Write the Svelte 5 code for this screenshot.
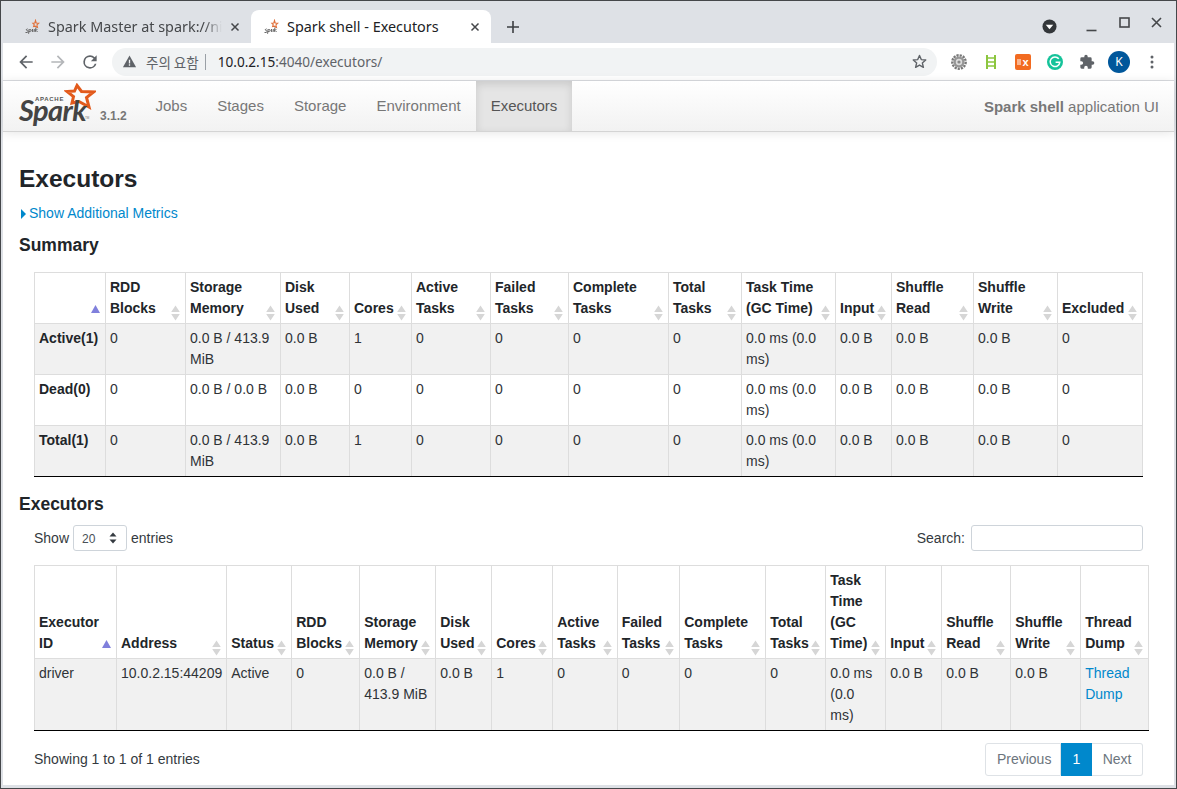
<script>
  const navItems = ['Jobs', 'Stages', 'Storage', 'Environment', 'Executors'];
  const sumWidths = [71, 80, 95, 69, 62, 79, 78, 100, 73, 94, 56, 82, 84, 85];
  const sumHead = [[''], ['RDD', 'Blocks'], ['Storage', 'Memory'], ['Disk', 'Used'], ['Cores'], ['Active', 'Tasks'], ['Failed', 'Tasks'], ['Complete', 'Tasks'], ['Total', 'Tasks'], ['Task Time', '(GC Time)'], ['Input'], ['Shuffle', 'Read'], ['Shuffle', 'Write'], ['Excluded']];
  const mkRow = (name, storage, disk, cores) => [name, '0', storage, disk, cores, '0', '0', '0', '0', '0.0 ms (0.0 ms)', '0.0 B', '0.0 B', '0.0 B', '0'];
  const sumRows = [
    mkRow('Active(1)', '0.0 B / 413.9 MiB', '0.0 B', '1'),
    mkRow('Dead(0)', '0.0 B / 0.0 B', '0.0 B', '0'),
    mkRow('Total(1)', '0.0 B / 413.9 MiB', '0.0 B', '1')
  ];
  const exWidths = [82, 110, 65, 68, 76, 56, 61, 64.5, 62.5, 86, 60, 60, 56, 69, 70, 68];
  const exHead = [['Executor', 'ID'], ['Address'], ['Status'], ['RDD', 'Blocks'], ['Storage', 'Memory'], ['Disk', 'Used'], ['Cores'], ['Active', 'Tasks'], ['Failed', 'Tasks'], ['Complete', 'Tasks'], ['Total', 'Tasks'], ['Task', 'Time', '(GC', 'Time)'], ['Input'], ['Shuffle', 'Read'], ['Shuffle', 'Write'], ['Thread', 'Dump']];
  const exRow = ['driver', '10.0.2.15:44209', 'Active', '0', '0.0 B / 413.9 MiB', '0.0 B', '1', '0', '0', '0', '0', '0.0 ms (0.0 ms)', '0.0 B', '0.0 B', '0.0 B'];
</script>

{#snippet sortIcon(active)}
  {#if active}
    <svg class="sort" viewBox="0 0 9 16" aria-hidden="true"><path d="M4.5 0 L9 8 H0 Z" fill="#8080dc"/></svg>
  {:else}
    <svg class="sort" viewBox="0 0 9 16" aria-hidden="true"><path d="M4.5 0.5 L8.8 7 H0.2 Z M0.2 9 H8.8 L4.5 15.5 Z" fill="#d6d6d6"/></svg>
  {/if}
{/snippet}

{#snippet favicon()}
  <svg class="fav" viewBox="0 0 16 16" aria-hidden="true">
    <path d="M11.5 1.5 L12.2 4 L14.8 4.2 L12.9 5.9 L13.5 8.4 L11.2 7.2 L9.6 7.6 L10.2 5.7 L8.8 4.2 L10.8 4 Z" fill="none" stroke="#e0703a" stroke-width="1.1"/>
    <path d="M1.5 13.5 Q4 14 4 12.4 Q4 11.6 2.6 11.3 Q1.4 10.6 3.6 9.8 M5 10.2 L4.6 14.8 M5.1 10.8 Q7.4 9.8 7 11.8 Q6.6 13 5 12.6 M8.6 10 Q7.8 12 8.4 12.8 M8.8 10.2 L8.6 12.8 M10 12.9 L10.5 10.2 M12 8.4 L11.2 13 M13.4 10 L12 11.4 L13.6 13" fill="none" stroke="#666" stroke-width="1"/>
  </svg>
{/snippet}

<div class="window">
  <div class="tabstrip">
    <div class="tab inactive">
      {@render favicon()}
      <span class="tab-title fade">Spark Master at spark://ni</span>
      <svg class="tab-x" viewBox="0 0 10 10"><path d="M1.5 1.5 L8.5 8.5 M8.5 1.5 L1.5 8.5" stroke="#45474a" stroke-width="1.5"/></svg>
    </div>
    <div class="tab active">
      {@render favicon()}
      <span class="tab-title">Spark shell - Executors</span>
      <svg class="tab-x" viewBox="0 0 10 10"><path d="M1.5 1.5 L8.5 8.5 M8.5 1.5 L1.5 8.5" stroke="#45474a" stroke-width="1.5"/></svg>
    </div>
    <svg class="newtab" viewBox="0 0 12 12"><path d="M6 0 V12 M0 6 H12" stroke="#3c3f43" stroke-width="1.6"/></svg>
    <div class="spacer"></div>
    <svg class="profile-drop" viewBox="0 0 16 16"><circle cx="8" cy="8" r="7.5" fill="#33363a"/><path d="M4 6 H12 L8 11 Z" fill="#fff"/></svg>
    <svg class="winbtn min" viewBox="0 0 11 11"><path d="M0.5 9.5 H10.5" stroke="#45474a" stroke-width="1.6"/></svg>
    <svg class="winbtn max" viewBox="0 0 11 11"><rect x="1" y="1" width="9" height="9" fill="none" stroke="#45474a" stroke-width="1.6"/></svg>
    <svg class="winbtn close" viewBox="0 0 11 11"><path d="M1 1 L10 10 M10 1 L1 10" stroke="#45474a" stroke-width="1.6"/></svg>
  </div>

  <div class="toolbar">
    <svg class="tb" viewBox="0 0 24 24"><path d="M20 11H7.83l5.59-5.59L12 4l-8 8 8 8 1.41-1.41L7.83 13H20v-2z" fill="#5f6368"/></svg>
    <svg class="tb" viewBox="0 0 24 24"><path d="M12 4l-1.41 1.41L16.17 11H4v2h12.17l-5.58 5.59L12 20l8-8z" fill="#b4b6b9"/></svg>
    <svg class="tb" viewBox="0 0 24 24"><path d="M17.65 6.35A7.96 7.96 0 0 0 12 4a8 8 0 1 0 7.73 10h-2.08A6 6 0 1 1 12 6c1.66 0 3.14.69 4.22 1.78L13 11h7V4l-2.35 2.35z" fill="#5f6368"/></svg>
    <div class="omnibox">
      <svg class="warn" viewBox="0 0 16 16"><path d="M8 1.5 L15 14 H1 Z" fill="#5f6368"/><path d="M7.3 6 H8.7 V10 H7.3 Z M7.3 11 H8.7 V12.4 H7.3 Z" fill="#f1f3f4"/></svg>
      <span class="secure">주의 요함</span>
      <span class="divider"></span>
      <span class="url"><b>10.0.2.15</b>:4040/executors/</span>
      <svg class="star" viewBox="0 0 24 24"><path d="M12 3.5 L14.5 9.3 L20.8 9.9 L16 14 L17.5 20.2 L12 17 L6.5 20.2 L8 14 L3.2 9.9 L9.5 9.3 Z" fill="none" stroke="#5f6368" stroke-width="2" stroke-linejoin="round"/></svg>
    </div>
    <div class="exts">
      <svg class="ext gear" viewBox="0 0 16 16"><circle cx="8" cy="8" r="6.7" fill="none" stroke="#777" stroke-width="2.4" stroke-dasharray="2.2 1"/><circle cx="8" cy="8" r="5.6" fill="#969696"/><circle cx="8" cy="8" r="3.2" fill="#dcdcdc"/><circle cx="8" cy="8" r="1.6" fill="#888"/></svg>
      <svg class="ext ladder" viewBox="0 0 12 14"><path d="M2 0 V14 M10 0 V14" stroke="#8cc63f" stroke-width="2"/><path d="M2 3 H10 M2 7 H10 M2 11 H10" stroke="#8cc63f" stroke-width="1.5"/></svg>
      <div class="ex-badge"><span class="ex-e"></span><span class="ex-x">x</span></div>
      <svg class="ext g" viewBox="0 0 16 16"><circle cx="8" cy="8" r="8" fill="#15c39a"/><path d="M11.8 4.8 A4.8 4.8 0 1 0 12.8 8.2 H8.6" fill="none" stroke="#fff" stroke-width="1.5"/></svg>
      <svg class="ext puzzle" viewBox="0 0 24 24"><path d="M20.5 11H19V7a2 2 0 0 0-2-2h-4V3.5a2.5 2.5 0 0 0-5 0V5H4a2 2 0 0 0-2 2v3.8h1.5a2.7 2.7 0 0 1 0 5.4H2V20a2 2 0 0 0 2 2h3.8v-1.5a2.7 2.7 0 0 1 5.4 0V22H17a2 2 0 0 0 2-2v-4h1.5a2.5 2.5 0 0 0 0-5z" fill="#5f6368"/></svg>
      <div class="avatar">K</div>
      <svg class="dots" viewBox="0 0 4 14"><circle cx="2" cy="2" r="1.5" fill="#5f6368"/><circle cx="2" cy="7" r="1.5" fill="#5f6368"/><circle cx="2" cy="12" r="1.5" fill="#5f6368"/></svg>
    </div>
  </div>

  <nav class="navbar">
    <div class="brand">
      <div class="logo">
        <svg class="logo-star" viewBox="0 0 32 28" aria-hidden="true"><path d="M13 2.5 L17.5 8.5 L29.5 9 L22.5 14.5 L25 24 L15 18.5 L8 20 L9.5 13.5 L3 8.5 L10.5 8 Z" fill="none" stroke="#e25a1c" stroke-width="3" stroke-linejoin="miter"/></svg>
        <span class="logo-apache">APACHE</span>
        <span class="logo-spark">Spark</span>
        <span class="logo-tm">TM</span>
      </div>
      <span class="version">3.1.2</span>
    </div>
    <ul class="nav">
      {#each navItems as item}
        <li class:on={item === 'Executors'}>{item}</li>
      {/each}
    </ul>
    <p class="app-title"><strong>Spark shell</strong> application UI</p>
  </nav>

  <main class="page">
    <h3>Executors</h3>
    <p class="metrics"><span class="caret"></span><a href="#m">Show Additional Metrics</a></p>
    <h4 class="sum-title">Summary</h4>
    <div class="indent">
      <table class="tbl">
        <colgroup>{#each sumWidths as w}<col style="width:{w}px" />{/each}</colgroup>
        <thead>
          <tr>
            {#each sumHead as lines, i}
              <th>{#each lines as l, j}{#if j}<br />{/if}{l}{/each}{@render sortIcon(i === 0)}</th>
            {/each}
          </tr>
        </thead>
        <tbody>
          {#each sumRows as row}
            <tr>
              {#each row as c, i}
                {#if i === 0}<td class="rowhead">{c}</td>{:else}<td>{c}</td>{/if}
              {/each}
            </tr>
          {/each}
        </tbody>
      </table>
    </div>

    <h4 class="ex-title">Executors</h4>
    <div class="indent">
      <div class="controls">
        <label class="show">Show
          <span class="select"><span>20</span>
            <svg viewBox="0 0 8 12"><path d="M4 0.5 L7.5 4.5 H0.5 Z M0.5 7.5 H7.5 L4 11.5 Z" fill="#343a40"/></svg>
          </span>
          entries</label>
        <label class="search">Search: <span class="input"></span></label>
      </div>
      <table class="tbl ex">
        <colgroup>{#each exWidths as w}<col style="width:{w}px" />{/each}</colgroup>
        <thead>
          <tr>
            {#each exHead as lines, i}
              <th>{#each lines as l, j}{#if j}<br />{/if}{l}{/each}{@render sortIcon(i === 0)}</th>
            {/each}
          </tr>
        </thead>
        <tbody>
          <tr>
            {#each exRow as c}<td>{c}</td>{/each}
            <td><a href="#t">Thread Dump</a></td>
          </tr>
        </tbody>
      </table>
      <div class="foot">
        <span>Showing 1 to 1 of 1 entries</span>
        <div class="pager">
          <span class="pg first-pg">Previous</span>
          <span class="pg cur">1</span>
          <span class="pg last-pg">Next</span>
        </div>
      </div>
    </div>
  </main>
</div>

<style>
  :global(body) { margin: 0; background: #dee1e6; }
  .window {
    width: 1177px; height: 789px; box-sizing: border-box; overflow: hidden;
    display: flex; flex-direction: column;
    border: 1px solid #45474a;
    padding: 0 2px 3px 2px; background: #dee1e6;
    font-family: "Liberation Sans", Arial, sans-serif; font-size: 14px; line-height: 21px; color: #212529;
  }
  .tabstrip { height: 42px; flex: none; display: flex; align-items: flex-end; }
  .tab { height: 33px; box-sizing: border-box; width: 240px; display: flex; align-items: center; padding: 0 11px 0 12px; font: 14.4px "Noto Sans", sans-serif; color: #3c4043; }
  .tab.inactive { width: 248px; padding-left: 21px; padding-right: 11px; color: #45474a; }
  .tab.active { background: #fff; border-radius: 8px 8px 0 0; color: #202124; }
  .fav { width: 16px; height: 16px; flex: none; margin-right: 8px; }
  .tab-title { flex: 1; white-space: nowrap; overflow: hidden; }
  .tab-title.fade { -webkit-mask-image: linear-gradient(to right, #000 90%, transparent); mask-image: linear-gradient(to right, #000 90%, transparent); margin-right: 8px; }
  .tab-x { width: 10px; height: 10px; flex: none; }
  .newtab { width: 12px; height: 12px; margin: 0 0 10px 16px; }
  .spacer { flex: 1; }
  .profile-drop { width: 15px; height: 15px; margin: 0 29px 9px 0; }
  .winbtn { width: 11px; height: 11px; flex: none; }
  .winbtn.min { margin: 0 22px 11px 0; }
  .winbtn.max { margin: 0 21px 15px 0; }
  .winbtn.close { margin: 0 12px 15px 0; }

  .toolbar { height: 37px; flex: none; background: #fff; display: flex; align-items: center; padding-left: 13px; border-bottom: 1px solid #dadce0; }
  .tb { width: 20px; height: 20px; flex: none; margin-right: 12px; }
  .omnibox { width: 825px; height: 28px; background: #f1f3f4; border-radius: 14px; display: flex; align-items: center; padding: 0 9px 0 10px; box-sizing: border-box; font: 13.6px "Noto Sans", "Noto Sans CJK KR", sans-serif; color: #5f6368; }
  .warn { width: 15px; height: 15px; flex: none; margin-right: 9px; }
  .secure { font-family: "Noto Sans CJK KR", sans-serif; font-size: 13.5px; white-space: nowrap; }
  .divider { width: 1px; height: 16px; background: #9aa0a6; margin: 0 12px 0 6px; flex: none; }
  .url { flex: 1; white-space: nowrap; }
  .url b { font-weight: 400; color: #202124; }
  .star { width: 17px; height: 17px; flex: none; }
  .exts { display: flex; align-items: center; margin-left: 14px; }
  .ext { width: 16px; height: 16px; flex: none; margin-right: 16px; }
  .ladder { width: 12px; height: 14px; margin-left: 2px; margin-right: 18px; }
  .puzzle { width: 16px; height: 16px; margin-right: 13px; }
  .ex-badge { width: 16px; height: 16px; border-radius: 2px; background: #f26b21; margin-right: 16px; display: flex; align-items: center; justify-content: center; gap: 1px; font: bold 11px/14px "Liberation Sans", sans-serif; color: #fff; flex: none; }
  .ex-e { width: 4px; height: 6px; background: #fff; opacity: 0.5; }
  .avatar { width: 22px; height: 22px; border-radius: 50%; background: #01579b; color: #fff; font: 12px/22px "Noto Sans", sans-serif; text-align: center; flex: none; margin-right: 20px; }
  .dots { width: 4px; height: 14px; flex: none; }

  .navbar { height: 50px; flex: none; display: flex; align-items: stretch; background: linear-gradient(#fff, #f2f2f2); border-bottom: 1px solid #d4d4d4; box-shadow: 0 1px 10px rgba(0,0,0,.1); position: relative; z-index: 1; }
  .brand { width: 137.5px; flex: none; display: flex; align-items: flex-end; }
  .logo { position: relative; width: 83px; height: 50px; margin-left: 14px; flex: none; }
  .logo-star { position: absolute; left: 47px; top: 2px; width: 32px; height: 28px; }
  .logo-apache { position: absolute; left: 18px; top: 14px; font: bold 6px/8px "Liberation Sans", sans-serif; letter-spacing: .7px; color: #555; }
  .logo-spark { position: absolute; left: 2px; top: 14px; font: italic 700 29px/30px "Lato", sans-serif; letter-spacing: -.6px; color: #444; }
  .logo-tm { position: absolute; left: 68px; top: 35px; font: 3px/4px "Liberation Sans", sans-serif; color: #777; }
  .version { font: bold 12px/16px "Liberation Sans", sans-serif; color: #777; margin: 0 0 7px 0; }
  .nav { display: flex; margin: 0; padding: 0; list-style: none; }
  .nav li { font-size: 15px; line-height: 50px; color: #777; padding: 0 15px; }
  .nav li.on { background: #e5e5e5; box-shadow: inset 0 3px 8px rgba(0,0,0,.125); color: #555; }
  .app-title { margin: 0 0 0 auto; padding-right: 15px; font-size: 15px; line-height: 52px; color: #777; white-space: nowrap; }

  .page { flex: 1; min-height: 0; background: #fff; padding: 0 16px; overflow: hidden; }
  h3 { font-size: 24.5px; line-height: 29px; font-weight: 700; margin: 32px 0 0; }
  .metrics { margin: 10px 0 0; line-height: 21px; display: flex; align-items: center; }
  a { color: #0088cc; text-decoration: none; }
  .caret { width: 0; height: 0; border-left: 5px solid #0088cc; border-top: 5px solid transparent; border-bottom: 5px solid transparent; margin: 0 3px 0 2px; }
  h4 { font-size: 17.5px; line-height: 21px; font-weight: 700; margin: 0; }
  .sum-title { margin-top: 11px; }
  .ex-title { margin-top: 17px; }
  .indent { margin-left: 15px; }
  .sum-title + .indent { margin-top: 16px; }

  .tbl { border-collapse: collapse; table-layout: fixed; width: max-content; }
  .tbl th, .tbl td { border: 1px solid #dddddd; padding: 4px; text-align: left; vertical-align: top; line-height: 21px; }
  .tbl th { vertical-align: bottom; position: relative; font-weight: 700; background: #fff; }
  .tbl td { color: #2f3337; background: #fff; }
  .tbl td.rowhead { font-weight: 700; color: #212529; }
  .tbl tbody tr:nth-child(odd) td { background: #f1f1f1; }
  .tbl tbody tr:last-child td { border-bottom-color: #000; }
  .sort { position: absolute; right: 5px; bottom: 2px; width: 9px; height: 16px; }
  .controls { display: flex; justify-content: space-between; width: 1109px; margin-top: 10px; height: 40px; }
  .show { display: flex; align-items: center; height: 26px; gap: 4px; color: #343a40; }
  .select { display: inline-flex; align-items: center; justify-content: space-between; box-sizing: border-box; width: 54px; height: 26px; padding: 2px 9px 0 8px; border: 1px solid #ced4da; border-radius: 3px; font-size: 12px; color: #495057; }
  .select svg { width: 8px; height: 12px; margin-top: -2px; }
  .search { display: flex; align-items: center; height: 26px; gap: 6px; color: #343a40; }
  .input { display: block; width: 172px; height: 26px; box-sizing: border-box; border: 1px solid #ced4da; border-radius: 3px; }
  .foot { display: flex; justify-content: space-between; align-items: center; width: 1109px; margin-top: 12px; color: #343a40; }
  .pager { display: flex; height: 33px; box-sizing: border-box; }
  .pg { display: flex; align-items: center; padding: 0 10.5px; border: 1px solid #dee2e6; border-left: 0; color: #6c757d; }
  .first-pg { border-left: 1px solid #dee2e6; border-radius: 3px 0 0 3px; padding: 0 9px 0 11px; }
  .last-pg { border-radius: 0 3px 3px 0; }
  .cur { background: #0088cc; border-color: #0088cc; color: #fff; padding: 0 11px; }
</style>
